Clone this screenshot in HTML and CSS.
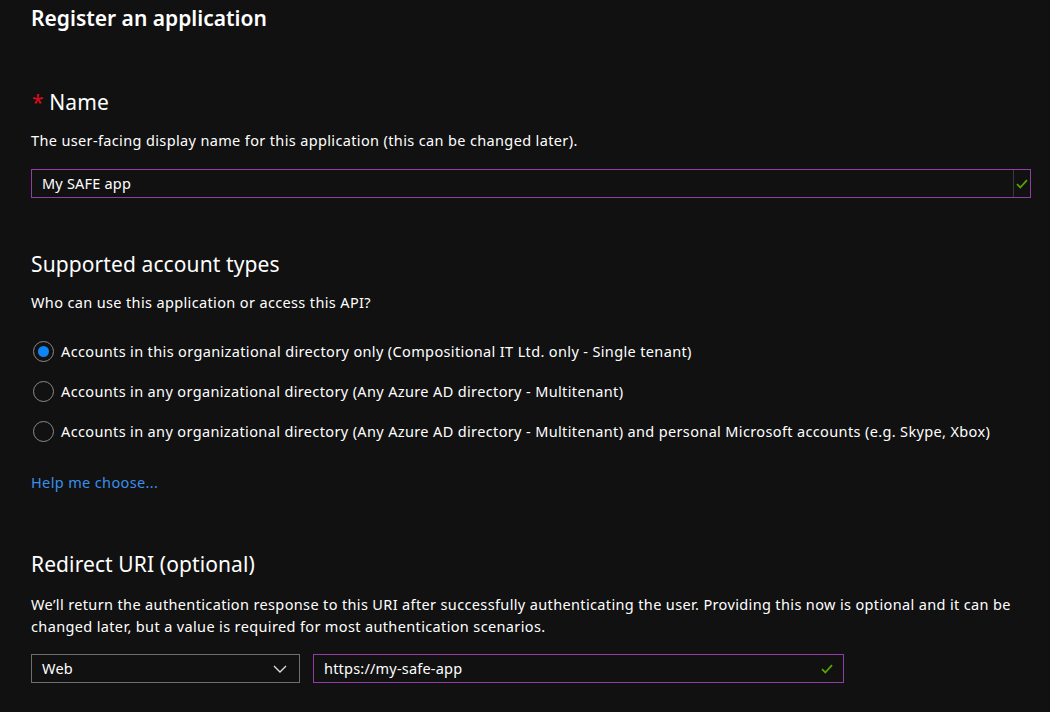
FILE: index.html
```html
<!DOCTYPE html>
<html lang="en">
<head>
<meta charset="utf-8">
<title>Register an application</title>
<link rel="stylesheet" href="styles.css">
</head>
<body>
<main class="page">
  <h1 class="title">Register an application</h1>

  <section class="section name-section">
    <h2 class="heading"><span class="req">*</span> Name</h2>
    <p class="desc">The user-facing display name for this application (this can be changed later).</p>
    <div class="field field-valid name-field">
      <span class="field-text">My SAFE app</span>
      <span class="field-sep"></span>
      <svg class="check" width="12" height="10" viewBox="0 0 12 10"><path d="M1 5.2 L4.3 8.5 L11 1.2" fill="none" stroke="#57a300" stroke-width="1.8"/></svg>
    </div>
  </section>

  <section class="section accounts-section">
    <h2 class="heading">Supported account types</h2>
    <p class="desc">Who can use this application or access this API?</p>
    <div class="radios">
      <label class="radio"><span class="radio-circle checked"></span><span>Accounts in this organizational directory only (Compositional IT Ltd. only - Single tenant)</span></label>
      <label class="radio"><span class="radio-circle"></span><span>Accounts in any organizational directory (Any Azure AD directory - Multitenant)</span></label>
      <label class="radio"><span class="radio-circle"></span><span>Accounts in any organizational directory (Any Azure AD directory - Multitenant) and personal Microsoft accounts (e.g. Skype, Xbox)</span></label>
    </div>
    <a class="link" href="#">Help me choose...</a>
  </section>

  <section class="section redirect-section">
    <h2 class="heading">Redirect URI (optional)</h2>
    <p class="desc para">We’ll return the authentication response to this URI after successfully authenticating the user. Providing this now is optional and it can be changed later, but a value is required for most authentication scenarios.</p>
    <div class="uri-row">
      <div class="field select">
        <span class="field-text">Web</span>
        <svg class="chev" width="14" height="8" viewBox="0 0 14 8"><path d="M1 1 L7 7 L13 1" fill="none" stroke="#e0e0e0" stroke-width="1.3"/></svg>
      </div>
      <div class="field field-valid uri-field">
        <span class="field-text">https://my-safe-app</span>
        <svg class="check" width="12" height="10" viewBox="0 0 12 10"><path d="M1 5.2 L4.3 8.5 L11 1.2" fill="none" stroke="#57a300" stroke-width="1.8"/></svg>
      </div>
    </div>
  </section>
</main>
</body>
</html>
```

FILE: styles.css
```css
* { box-sizing: border-box; }
html, body { margin: 0; padding: 0; }
body {
  background: #111111;
  color: #ffffff;
  font-family: "Noto Sans", "Open Sans", sans-serif;
  font-size: 14.5px;
  letter-spacing: 0.36px;
  width: 1050px;
  height: 712px;
  overflow: hidden;
}
.page {
  padding: 4px 20px 0 31px;
  display: flex;
  flex-direction: column;
}
.title {
  margin: 0;
  font-size: 21px;
  line-height: 28px;
  font-weight: 600;
  letter-spacing: 0;
}
.section { display: flex; flex-direction: column; }
.name-section { margin-top: 56px; }
.accounts-section { margin-top: 52px; }
.redirect-section { margin-top: 58px; }
.heading {
  margin: 0;
  font-size: 21px;
  line-height: 28px;
  font-weight: 400;
  letter-spacing: 0.1px;
}
.req { color: #e00b1c; margin-left: 1px; }
.desc {
  margin: 14px 0 0;
  line-height: 20px;
  color: #ffffff;
}
.para { margin-top: 15px; line-height: 22px; }
.field {
  height: 29px;
  border: 1px solid #6e6e6e;
  display: flex;
  align-items: center;
  padding: 0 10px;
  background: #111111;
}
.field-valid { border-color: #8f3ea5; }
.field-text { flex: 1; color: #ffffff; letter-spacing: 0.2px; padding-bottom: 1px; }
.name-field { margin-top: 19px; width: 1000px; padding-right: 0; }
.field-sep {
  width: 1px;
  align-self: stretch;
  background: #3a3a3a;
}
.name-field .check { margin: 0 2px 0 2px; }
.radios {
  margin-top: 29px;
  display: flex;
  flex-direction: column;
  gap: 20px;
}
.radio {
  display: flex;
  align-items: center;
  height: 20px;
  line-height: 20px;
  gap: 7px;
  margin-left: 2px;
}
.radio-circle {
  width: 21px;
  height: 21px;
  border-radius: 50%;
  border: 1.5px solid #8a8a8a;
  display: flex;
  align-items: center;
  justify-content: center;
  flex: none;
}
.radio-circle.checked::after {
  content: "";
  width: 11px;
  height: 11px;
  border-radius: 50%;
  background: #0f84f4;
}
.link {
  margin-top: 31px;
  color: #3b8fe8;
  text-decoration: none;
  line-height: 20px;
  align-self: flex-start;
}
.uri-row {
  margin-top: 17px;
  display: flex;
  gap: 13px;
}
.select { width: 269px; }
.chev { margin-right: 2px; }
.uri-field { width: 531px; }
.uri-field .check { margin-right: 0; }
```
